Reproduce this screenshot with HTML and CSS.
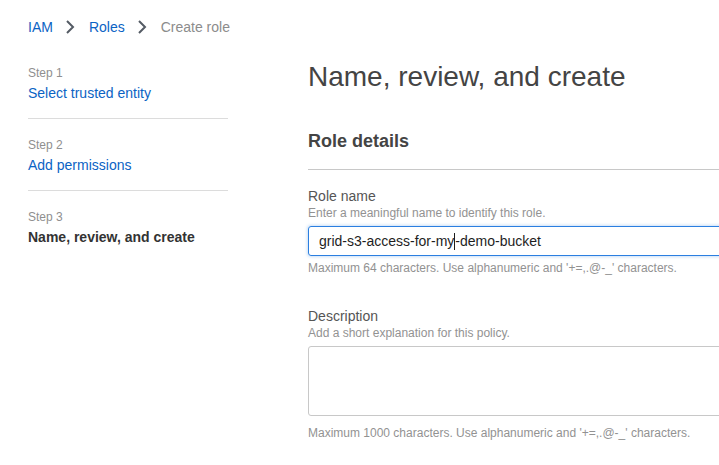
FILE: index.html
```html
<!DOCTYPE html>
<html>
<head>
<meta charset="utf-8">
<link rel="stylesheet" href="styles.css">
</head>
<body>
<nav class="crumbs">
  <a class="crumb-link">IAM</a>
  <svg class="chev" width="10" height="16" viewBox="0 0 10 16"><polyline points="2,2 8,8 2,14" fill="none" stroke="#545b64" stroke-width="2"/></svg>
  <a class="crumb-link">Roles</a>
  <svg class="chev" width="10" height="16" viewBox="0 0 10 16"><polyline points="2,2 8,8 2,14" fill="none" stroke="#545b64" stroke-width="2"/></svg>
  <span class="crumb-current">Create role</span>
</nav>
<div class="layout">
  <aside class="steps">
    <div class="step">
      <div class="step-num">Step 1</div>
      <a class="step-link">Select trusted entity</a>
    </div>
    <div class="step">
      <div class="step-num">Step 2</div>
      <a class="step-link">Add permissions</a>
    </div>
    <div class="step last">
      <div class="step-num">Step 3</div>
      <div class="step-active">Name, review, and create</div>
    </div>
  </aside>
  <main class="main">
    <h1 class="title">Name, review, and create</h1>
    <h2 class="section-title">Role details</h2>
    <div class="field">
      <div class="label">Role name</div>
      <div class="hint">Enter a meaningful name to identify this role.</div>
      <div class="input focused">grid-s3-access-for-my<span class="caret"></span>-demo-bucket</div>
      <div class="constraint">Maximum 64 characters. Use alphanumeric and '+=,.@-_' characters.</div>
    </div>
    <div class="field second">
      <div class="label">Description</div>
      <div class="hint">Add a short explanation for this policy.</div>
      <div class="textarea"></div>
      <div class="constraint wide">Maximum 1000 characters. Use alphanumeric and '+=,.@-_' characters.</div>
    </div>
  </main>
</div>
</body>
</html>
```
FILE: styles.css
```css
html, body {
  margin: 0;
  padding: 0;
  background: #ffffff;
  overflow: hidden;
  width: 719px;
  height: 465px;
}
body {
  font-family: "Liberation Sans", Arial, sans-serif;
  color: #16191f;
}
.crumbs {
  display: flex;
  align-items: center;
  padding: 17px 0 0 28px;
  height: 20px;
  font-size: 14px;
  line-height: 20px;
}
.crumb-link {
  color: #0b63c4;
}
.chev {
  margin: 0 14px 0 12px;
}
.crumb-current {
  color: #8c8c8c;
}
.layout {
  display: flex;
  gap: 80px;
  padding-left: 28px;
  margin-top: 28px;
  overflow: hidden;
}
.steps {
  flex: 0 0 200px;
}
.step {
  padding: 0 0 15px;
  border-bottom: 1px solid #dcdcdc;
  margin-bottom: 18px;
}
.step.last {
  border-bottom: none;
}
.step-num {
  font-size: 12px;
  line-height: 16px;
  color: #8f8f8f;
  margin-bottom: 2px;
}
.step-link {
  display: block;
  font-size: 14px;
  line-height: 20px;
  color: #0b63c4;
}
.step-active {
  font-size: 14px;
  line-height: 20px;
  font-weight: bold;
  color: #333333;
}
.main {
  flex: 0 0 480px;
  margin-top: -6px;
}
.title {
  margin: 0;
  width: fit-content;
  font-size: 28px;
  line-height: 36px;
  font-weight: normal;
  color: #444444;
}
.section-title {
  margin: 34px 0 0;
  padding-bottom: 16px;
  border-bottom: 1px solid #c8c8c8;
  font-size: 18px;
  line-height: 24px;
  font-weight: bold;
  color: #444444;
}
.field {
  margin-top: 17px;
}
.field.second {
  margin-top: 31px;
}
.label {
  font-size: 14px;
  line-height: 18px;
  color: #555555;
}
.hint {
  font-size: 12px;
  line-height: 16px;
  color: #929292;
}
.input {
  margin-top: 5px;
  height: 28px;
  box-sizing: content-box;
  border: 1px solid #2b7fe0;
  border-radius: 3px;
  box-shadow: 0 0 3px 1px rgba(43, 127, 224, 0.25);
  padding: 0 10px;
  font-size: 14px;
  line-height: 28px;
  color: #1e1e1e;
  white-space: nowrap;
}
.caret {
  display: inline-block;
  width: 1px;
  height: 17px;
  background: #1e1e1e;
  vertical-align: -4px;
}
.constraint {
  margin-top: 4px;
  font-size: 12px;
  line-height: 16px;
  color: #929292;
  white-space: nowrap;
}
.textarea {
  margin-top: 5px;
  height: 68px;
  border: 1px solid #c8c8c8;
  border-radius: 3px;
}
.constraint.wide {
  margin-top: 9px;
}
```
